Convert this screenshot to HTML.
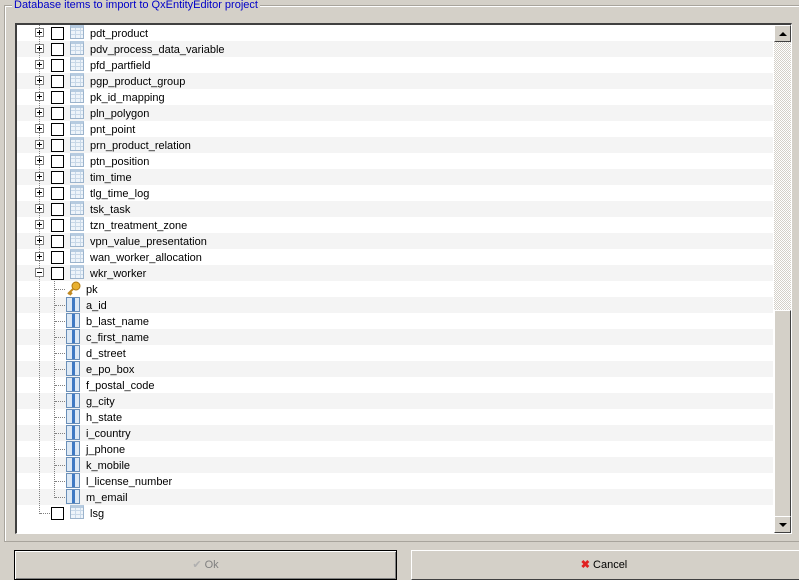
<!DOCTYPE html><html><head><style>
body{margin:0;width:799px;height:578px;background:#d4d0c8;font-family:"Liberation Sans",sans-serif;font-size:11px;position:relative;overflow:hidden}
.gb{position:absolute;left:4px;top:5px;width:800px;height:535px;border:1px solid #a8a49c;box-shadow:1px 1px 0 #fff inset}
.gt{position:absolute;left:7px;top:-6px;background:#d4d0c8;color:#0000c8;font-size:11px;padding:0 2px;line-height:11px}
.tree{position:absolute;left:15px;top:23px;width:774px;height:508px;background:#fff;border-top:2px solid #404040;border-left:2px solid #404040;border-right:1px solid #fff;border-bottom:1px solid #fff;overflow:hidden}
.row{position:absolute;left:0;width:756px;height:16px}
.row.g{background:#f4f4f4}
.t{position:absolute;top:2px;font-size:11px;color:#000;line-height:14px}
.exp{position:absolute;width:7px;height:7px;border:1px solid #808080;background:#fff;top:3px;z-index:3}
.exp:before{content:"";position:absolute;left:1px;top:3px;width:5px;height:1px;background:#000}
.exp.p:after{content:"";position:absolute;left:3px;top:1px;width:1px;height:5px;background:#000}
.cb{position:absolute;width:11px;height:11px;border:1px solid #000;background:#fff;top:2px}
.ic{position:absolute;top:0;width:14px;height:14px;border:1px solid #9bb3cc;background:repeating-linear-gradient(90deg,transparent 0 4px,#c8d8e8 4px 5px),repeating-linear-gradient(0deg,#eef4fa 0 3px,#c8d8e8 3px 4px);box-sizing:border-box;border-top:3px solid #b6cbe0}
.col{position:absolute;top:0;width:14px;height:15px;border:1px solid #6a8fb8;box-sizing:border-box;background:linear-gradient(90deg,#dde9f5 0 5px,#3f79c3 5px 8px,#dde9f5 8px)}
.sb{position:absolute;left:757px;top:0;width:17px;height:508px;background:repeating-conic-gradient(#d4d0c8 0 25%,#fff 0 50%) 0 0/2px 2px;z-index:4}
.btn{position:absolute;background:#d4d0c8;border:1px solid;border-color:#fff #404040 #404040 #fff;box-sizing:border-box}
.pb{position:absolute;font-size:11px;line-height:27px;text-align:center;top:1px}
.dl{position:absolute;border-left:1px dotted #808080;z-index:2}
.dh{position:absolute;border-top:1px dotted #808080;z-index:2}
</style></head><body>
<div class="gb"><span class="gt">Database items to import to QxEntityEditor project</span></div>
<div class="tree">
<div class="row" style="top:0"><div class="exp p" style="left:18px"></div><div class="cb" style="left:34px"></div><div class="ic" style="left:53px"></div><span class="t" style="left:73px">pdt_product</span></div>
<div class="row g" style="top:16px"><div class="exp p" style="left:18px"></div><div class="cb" style="left:34px"></div><div class="ic" style="left:53px"></div><span class="t" style="left:73px">pdv_process_data_variable</span></div>
<div class="row" style="top:32px"><div class="exp p" style="left:18px"></div><div class="cb" style="left:34px"></div><div class="ic" style="left:53px"></div><span class="t" style="left:73px">pfd_partfield</span></div>
<div class="row g" style="top:48px"><div class="exp p" style="left:18px"></div><div class="cb" style="left:34px"></div><div class="ic" style="left:53px"></div><span class="t" style="left:73px">pgp_product_group</span></div>
<div class="row" style="top:64px"><div class="exp p" style="left:18px"></div><div class="cb" style="left:34px"></div><div class="ic" style="left:53px"></div><span class="t" style="left:73px">pk_id_mapping</span></div>
<div class="row g" style="top:80px"><div class="exp p" style="left:18px"></div><div class="cb" style="left:34px"></div><div class="ic" style="left:53px"></div><span class="t" style="left:73px">pln_polygon</span></div>
<div class="row" style="top:96px"><div class="exp p" style="left:18px"></div><div class="cb" style="left:34px"></div><div class="ic" style="left:53px"></div><span class="t" style="left:73px">pnt_point</span></div>
<div class="row g" style="top:112px"><div class="exp p" style="left:18px"></div><div class="cb" style="left:34px"></div><div class="ic" style="left:53px"></div><span class="t" style="left:73px">prn_product_relation</span></div>
<div class="row" style="top:128px"><div class="exp p" style="left:18px"></div><div class="cb" style="left:34px"></div><div class="ic" style="left:53px"></div><span class="t" style="left:73px">ptn_position</span></div>
<div class="row g" style="top:144px"><div class="exp p" style="left:18px"></div><div class="cb" style="left:34px"></div><div class="ic" style="left:53px"></div><span class="t" style="left:73px">tim_time</span></div>
<div class="row" style="top:160px"><div class="exp p" style="left:18px"></div><div class="cb" style="left:34px"></div><div class="ic" style="left:53px"></div><span class="t" style="left:73px">tlg_time_log</span></div>
<div class="row g" style="top:176px"><div class="exp p" style="left:18px"></div><div class="cb" style="left:34px"></div><div class="ic" style="left:53px"></div><span class="t" style="left:73px">tsk_task</span></div>
<div class="row" style="top:192px"><div class="exp p" style="left:18px"></div><div class="cb" style="left:34px"></div><div class="ic" style="left:53px"></div><span class="t" style="left:73px">tzn_treatment_zone</span></div>
<div class="row g" style="top:208px"><div class="exp p" style="left:18px"></div><div class="cb" style="left:34px"></div><div class="ic" style="left:53px"></div><span class="t" style="left:73px">vpn_value_presentation</span></div>
<div class="row" style="top:224px"><div class="exp p" style="left:18px"></div><div class="cb" style="left:34px"></div><div class="ic" style="left:53px"></div><span class="t" style="left:73px">wan_worker_allocation</span></div>
<div class="row g" style="top:240px"><div class="exp" style="left:18px"></div><div class="cb" style="left:34px"></div><div class="ic" style="left:53px"></div><span class="t" style="left:73px">wkr_worker</span></div>
<div class="row" style="top:256px"><svg style="position:absolute;left:49px;top:0" width="16" height="16"><circle cx="10" cy="5" r="4" fill="#e8b030" stroke="#b07810"/><path d="M7 8 L2 13 M3 12 L5 14 M4 11 L6 13" stroke="#c08820" stroke-width="2"/></svg><span class="t" style="left:69px">pk</span></div>
<div class="row g" style="top:272px"><div class="col" style="left:49px"></div><span class="t" style="left:69px">a_id</span></div>
<div class="row" style="top:288px"><div class="col" style="left:49px"></div><span class="t" style="left:69px">b_last_name</span></div>
<div class="row g" style="top:304px"><div class="col" style="left:49px"></div><span class="t" style="left:69px">c_first_name</span></div>
<div class="row" style="top:320px"><div class="col" style="left:49px"></div><span class="t" style="left:69px">d_street</span></div>
<div class="row g" style="top:336px"><div class="col" style="left:49px"></div><span class="t" style="left:69px">e_po_box</span></div>
<div class="row" style="top:352px"><div class="col" style="left:49px"></div><span class="t" style="left:69px">f_postal_code</span></div>
<div class="row g" style="top:368px"><div class="col" style="left:49px"></div><span class="t" style="left:69px">g_city</span></div>
<div class="row" style="top:384px"><div class="col" style="left:49px"></div><span class="t" style="left:69px">h_state</span></div>
<div class="row g" style="top:400px"><div class="col" style="left:49px"></div><span class="t" style="left:69px">i_country</span></div>
<div class="row" style="top:416px"><div class="col" style="left:49px"></div><span class="t" style="left:69px">j_phone</span></div>
<div class="row g" style="top:432px"><div class="col" style="left:49px"></div><span class="t" style="left:69px">k_mobile</span></div>
<div class="row" style="top:448px"><div class="col" style="left:49px"></div><span class="t" style="left:69px">l_license_number</span></div>
<div class="row g" style="top:464px"><div class="col" style="left:49px"></div><span class="t" style="left:69px">m_email</span></div>
<div class="row" style="top:480px"><div class="cb" style="left:34px"></div><div class="ic" style="left:53px"></div><span class="t" style="left:73px">lsg</span></div>
<div class="dl" style="left:22px;top:0;height:489px"></div>
<div class="dl" style="left:37px;top:256px;height:217px"></div>
<div class="dh" style="left:23px;top:488px;width:10px"></div>
<div class="dh" style="left:38px;top:264px;width:10px"></div>
<div class="dh" style="left:38px;top:280px;width:10px"></div>
<div class="dh" style="left:38px;top:296px;width:10px"></div>
<div class="dh" style="left:38px;top:312px;width:10px"></div>
<div class="dh" style="left:38px;top:328px;width:10px"></div>
<div class="dh" style="left:38px;top:344px;width:10px"></div>
<div class="dh" style="left:38px;top:360px;width:10px"></div>
<div class="dh" style="left:38px;top:376px;width:10px"></div>
<div class="dh" style="left:38px;top:392px;width:10px"></div>
<div class="dh" style="left:38px;top:408px;width:10px"></div>
<div class="dh" style="left:38px;top:424px;width:10px"></div>
<div class="dh" style="left:38px;top:440px;width:10px"></div>
<div class="dh" style="left:38px;top:456px;width:10px"></div>
<div class="dh" style="left:38px;top:472px;width:10px"></div>
<div class="sb">
<div class="btn" style="left:0;top:0;width:17px;height:17px"><div style="position:absolute;left:4px;top:6px;border-left:4px solid transparent;border-right:4px solid transparent;border-bottom:4px solid #000"></div></div>
<div class="btn" style="left:0;top:285px;width:17px;height:207px"></div>
<div class="btn" style="left:0;top:491px;width:17px;height:17px"><div style="position:absolute;left:4px;top:6px;border-left:4px solid transparent;border-right:4px solid transparent;border-top:4px solid #000"></div></div>
</div>
</div>
<div class="btn" style="left:14px;top:550px;width:383px;height:30px;border:1px solid #000;box-shadow:inset 1px 1px 0 #fff,inset -1px -1px 0 #808080"><div class="pb" style="left:0;width:100%;color:#808080"><span style="color:#b0b0b0">✔</span> Ok</div></div>
<div class="btn" style="left:411px;top:550px;width:390px;height:30px"><div class="pb" style="left:0;width:384px"><span style="color:#e02020;font-weight:bold">✖</span> Cancel</div></div>
</body></html>
